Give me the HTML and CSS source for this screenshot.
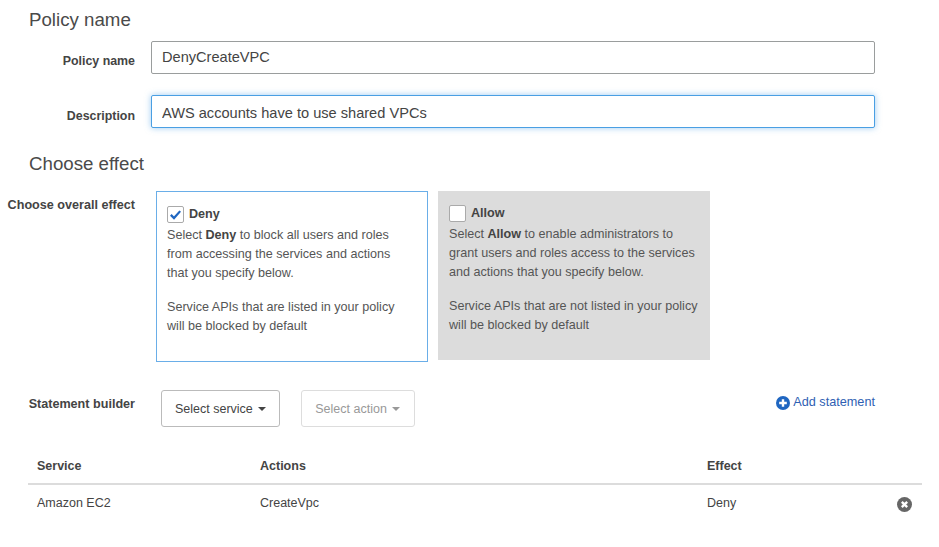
FILE: index.html
```html
<!DOCTYPE html>
<html lang="en">
<head>
<meta charset="utf-8">
<title>Policy</title>
<link rel="stylesheet" href="styles.css">
</head>
<body>
<main class="page">
  <h2 class="heading first">Policy name</h2>
  <div class="field">
    <label class="label" for="pn">Policy name</label>
    <input class="input name" id="pn" value="DenyCreateVPC">
  </div>
  <div class="field second">
    <label class="label" for="ds">Description</label>
    <input class="input focus" id="ds" value="AWS accounts have to use shared VPCs">
  </div>
  <h2 class="heading effect-heading">Choose effect</h2>
  <div class="effect-row">
    <div class="label overall">Choose overall effect</div>
    <section class="card deny">
      <div class="card-title">
        <span class="check">
          <svg viewBox="0 0 16 16" width="15" height="15"><path d="M3 8.4 6.4 11.8 13 4.4" fill="none" stroke="#1f66c1" stroke-width="2.4"/></svg>
        </span>
        <b>Deny</b>
      </div>
      <p>Select <b>Deny</b> to block all users and roles from accessing the services and actions that you specify below.</p>
      <p class="gap">Service APIs that are listed in your policy will be blocked by default</p>
    </section>
    <section class="card allow">
      <div class="card-title">
        <span class="check"></span>
        <b>Allow</b>
      </div>
      <p>Select <b>Allow</b> to enable administrators to grant users and roles access to the services and actions that you specify below.</p>
      <p class="gap">Service APIs that are not listed in your policy will be blocked by default</p>
    </section>
  </div>
  <div class="builder">
    <div class="label builder-label">Statement builder</div>
    <button class="btn">Select service <i class="caret"></i></button>
    <button class="btn off">Select action <i class="caret"></i></button>
    <a class="add" href="#">
      <svg viewBox="0 0 14 14" width="14" height="14"><circle cx="7" cy="7" r="7" fill="#1f66c1"/><path d="M7 3.2v7.6M3.2 7h7.6" stroke="#fff" stroke-width="2.4"/></svg>
      Add statement
    </a>
  </div>
  <div class="table">
    <div class="row head">
      <div>Service</div><div>Actions</div><div>Effect</div>
    </div>
    <div class="row body-row">
      <div>Amazon EC2</div><div>CreateVpc</div><div>Deny</div>
      <svg class="remove" viewBox="0 0 14 14" width="15" height="15"><circle cx="7" cy="7" r="7" fill="#666"/><path d="M4.5 4.5l5 5M9.5 4.5l-5 5" stroke="#fff" stroke-width="2.2"/></svg>
    </div>
  </div>
</main>
</body>
</html>
```
FILE: styles.css
```css
* { box-sizing: border-box; }
html, body { margin: 0; background: #fff; }
body {
  width: 939px;
  height: 547px;
  overflow: hidden;
  font-family: "Liberation Sans", Arial, sans-serif;
  color: #444;
}
.page { padding: 10px 0 0 0; }
.heading {
  margin: 0 0 0 29px;
  font-size: 18.7px;
  line-height: 20px;
  font-weight: 400;
  color: #4a4a4a;
}
.field {
  display: flex;
  align-items: center;
  margin-top: 11px;
}
.field.second { margin-top: 21px; }
.label {
  width: 135px;
  flex: none;
  text-align: right;
  font-size: 12.6px;
  font-weight: 700;
  color: #444;
  line-height: 16px;
}
.field .label { padding-top: 7px; font-size: 12.4px; }
.field.second .label { padding-top: 9px; }
.input {
  display: block;
  width: 724px;
  height: 33px;
  margin-left: 16px;
  padding: 0 10px;
  border: 1px solid #9a9d9d;
  border-radius: 2px;
  background: #fff;
  font: 14.6px "Liberation Sans", Arial, sans-serif;
  color: #444;
  outline: none;
}
.input.name { padding-bottom: 2px; }
.input.focus {
  padding-top: 2px;
  border-color: #4a9fe3;
  box-shadow: 0 0 6px rgba(74, 159, 227, .55);
}
.effect-heading { margin-top: 26px; }
.effect-row {
  display: flex;
  align-items: flex-start;
  margin-top: 17px;
}
.overall { padding-top: 6px; }
.card {
  width: 272px;
  font-size: 12.6px;
  line-height: 19px;
  color: #555;
}
.card p { margin: 3px 0 0; }
.card p.gap { margin-top: 15px; }
.card b { color: #444; }
.deny {
  height: 171px;
  margin-left: 21px;
  padding: 13px 30px 0 10px;
  border: 1px solid #6aaee8;
}
.allow {
  height: 169px;
  margin-left: 10px;
  padding: 13px 11px 0;
  background: #dcdcdc;
}
.card-title {
  display: flex;
  align-items: center;
  gap: 5px;
  height: 18px;
  font-size: 12.6px;
}
.check {
  display: block;
  flex: none;
  width: 17px;
  height: 17px;
  border: 1px solid #aaa;
  border-radius: 2px;
  background: #fff;
}
.check svg { display: block; }
.builder {
  display: flex;
  align-items: flex-start;
  margin-top: 28px;
}
.builder-label { padding-top: 6px; }
.btn {
  height: 37px;
  padding: 0 13px;
  border: 1px solid #bbb;
  border-radius: 3px;
  background: #fff;
  font: 12.5px "Liberation Sans", Arial, sans-serif;
  color: #444;
}
.btn:first-of-type { margin-left: 26px; }
.btn.off {
  margin-left: 21px;
  padding-right: 14px;
  border-color: #ddd;
  color: #999;
}
.caret {
  display: inline-block;
  margin-left: 2px;
  vertical-align: middle;
  border-top: 4px solid currentColor;
  border-left: 4px solid transparent;
  border-right: 4px solid transparent;
}
.add {
  display: flex;
  align-items: center;
  gap: 3px;
  margin-left: auto;
  margin-right: 64px;
  padding-top: 4px;
  font-size: 12.7px;
  line-height: 16px;
  color: #2f5fb3;
  text-decoration: none;
}
.add svg { margin-top: 2px; }
.table { margin: 24px 17px 0 28px; font-size: 12.5px; }
.row {
  display: grid;
  grid-template-columns: 223px 447px 1fr;
  padding-left: 9px;
  position: relative;
}
.row.head {
  height: 34px;
  padding-top: 7px;
  line-height: 16px;
  font-weight: 700;
  color: #444;
  border-bottom: 2px solid #dcdcdc;
}
.body-row { padding-top: 10px; line-height: 16px; color: #444; }
.remove { position: absolute; right: 10px; top: 12px; }
```
